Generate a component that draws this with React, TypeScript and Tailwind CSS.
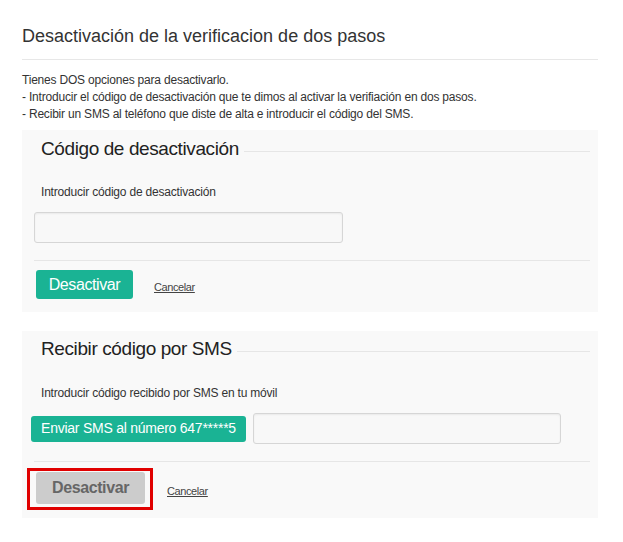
import React from "react";

function SectionHeading({ children }: { children: React.ReactNode }) {
  return (
    <div className="flex items-center gap-[5px] pl-[19px] pr-[8px]">
      <h3 className="text-[19px] leading-[24px] tracking-[-0.4px] text-[#222] whitespace-nowrap">{children}</h3>
      <div className="mt-[5px] h-px flex-1 bg-[#e6e6e6]" />
    </div>
  );
}

export default function App() {
  return (
    <div
      className="min-h-[542px] w-full bg-white px-[22px] pt-[26px] text-[#333]"
      style={{ fontFamily: '"Liberation Sans", Arial, sans-serif' }}
    >
      <h2 className="text-[18px] leading-[20px] text-[#333]">Desactivación de la verificacion de dos pasos</h2>
      <div className="mt-[13px] h-px w-[576px] bg-[#e7e7e7]" />
      <div className="mt-[12px] text-[12px] leading-[17px] tracking-[-0.2px] text-[#333]">
        <p>Tienes DOS opciones para desactivarlo.</p>
        <p>- Introducir el código de desactivación que te dimos al activar la verifiación en dos pasos.</p>
        <p>- Recibir un SMS al teléfono que diste de alta e introducir el código del SMS.</p>
      </div>

      {/* Card 1 */}
      <div className="mt-[7px] w-[576px] bg-[#f9f9f9] pt-[7px] pb-[13px]">
        <SectionHeading>Código de desactivación</SectionHeading>
        <p className="mt-[23px] pl-[19px] text-[12px] leading-[17px] tracking-[-0.2px] text-[#333]">Introducir código de desactivación</p>
        <div className="mt-[11px] pl-[12px]">
          <input
            type="text"
            className="h-[31px] w-[309px] rounded-[3px] border border-[#d6d6d6] bg-[#f8f8f8] shadow-[inset_0_1px_2px_rgba(0,0,0,0.06)] outline-none"
          />
        </div>
        <div className="ml-[12px] mr-[8px] mt-[17px] h-px bg-[#e6e6e6]" />
        <div className="mt-[9px] flex items-center pl-[14px]">
          <button className="h-[29px] w-[97px] rounded-[3px] bg-[#1ab394] text-[16px] tracking-[-0.4px] text-white">Desactivar</button>
          <a href="#" className="ml-[21px] mt-[5px] text-[11px] tracking-[-0.4px] text-[#444] underline">Cancelar</a>
        </div>
      </div>

      {/* Card 2 */}
      <div className="mt-[19px] w-[576px] bg-[#f9f9f9] pt-[6px] pb-[8px]">
        <SectionHeading>Recibir código por SMS</SectionHeading>
        <p className="mt-[24px] pl-[19px] text-[12px] leading-[17px] tracking-[-0.2px] text-[#333]">Introducir código recibido por SMS en tu móvil</p>
        <div className="mt-[11px] flex items-center pl-[9px]">
          <button className="h-[26px] w-[215px] rounded-[3px] bg-[#1ab394] text-[14px] tracking-[-0.25px] text-white whitespace-nowrap">
            Enviar SMS al número 647*****5
          </button>
          <input
            type="text"
            className="ml-[7px] h-[31px] w-[308px] rounded-[3px] border border-[#d6d6d6] bg-[#f8f8f8] shadow-[inset_0_1px_2px_rgba(0,0,0,0.06)] outline-none"
          />
        </div>
        <div className="ml-[12px] mr-[8px] mt-[17px] h-px bg-[#e6e6e6]" />
        <div className="mt-[6px] flex items-center pl-[5px]">
          <div className="border-[3px] border-[#e00000] pl-[6px] pr-[5px] pt-[1px] pb-[3px]">
            <button className="h-[32px] w-[109px] rounded-[3px] bg-[#cccccc] text-[16px] font-bold tracking-[-0.4px] text-[#666]">Desactivar</button>
          </div>
          <a href="#" className="ml-[14px] mt-[4px] text-[11px] tracking-[-0.4px] text-[#444] underline">Cancelar</a>
        </div>
      </div>
    </div>
  );
}
